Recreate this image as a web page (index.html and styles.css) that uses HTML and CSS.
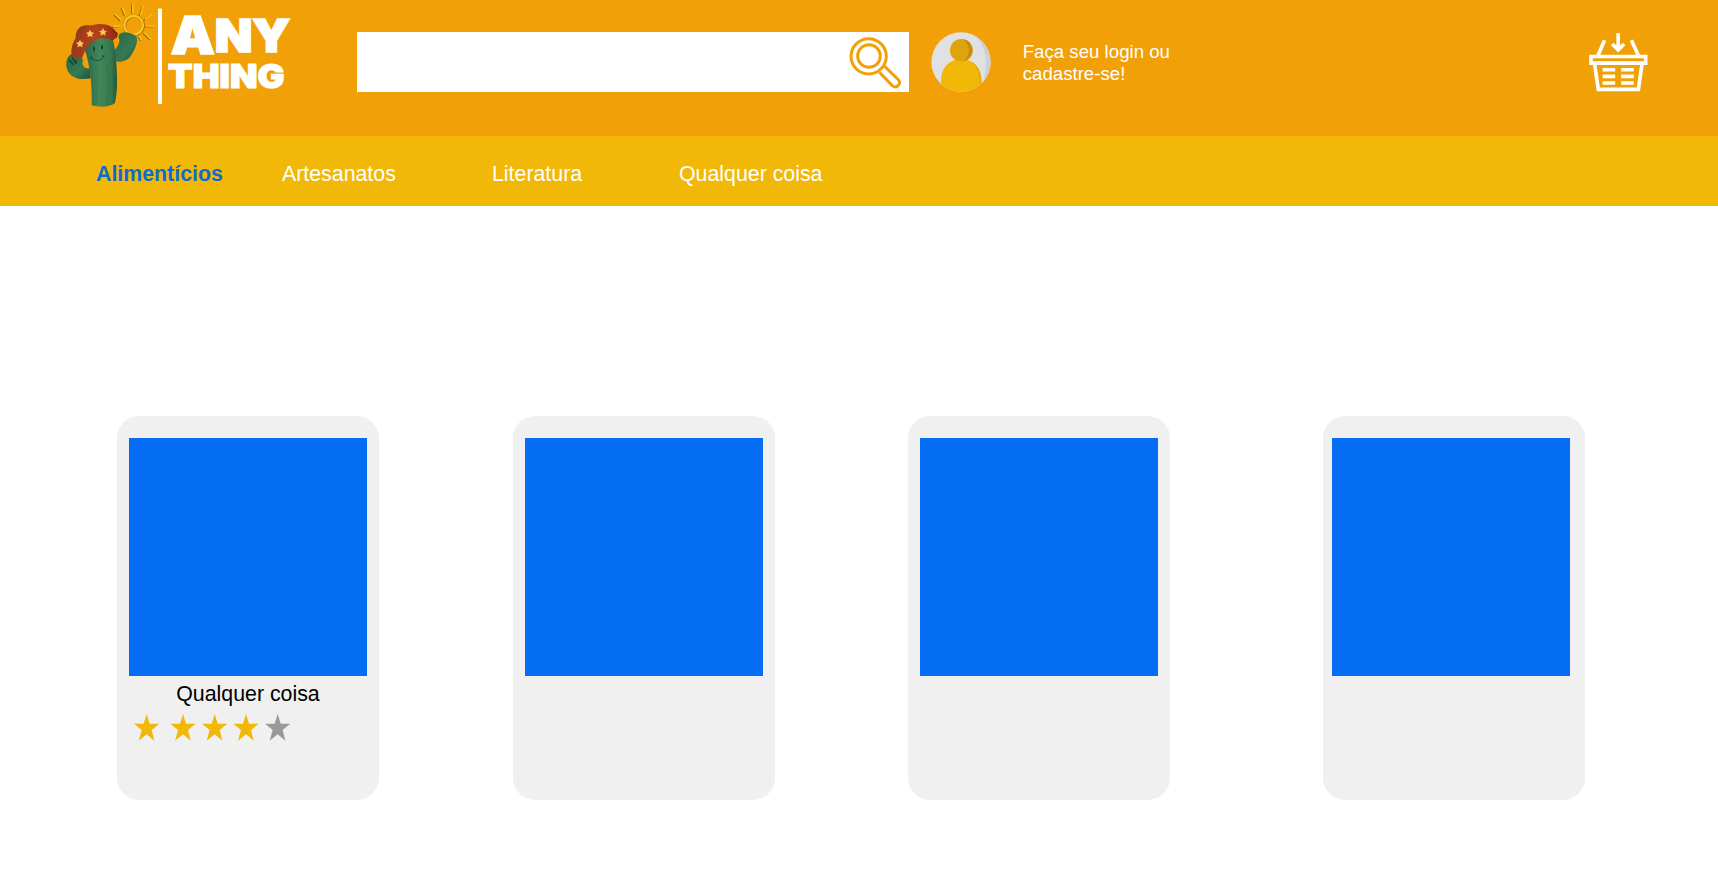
FILE: index.html
```html
<!DOCTYPE html>
<html lang="pt-BR">
<head>
<meta charset="utf-8">
<title>Any Thing</title>
<link rel="stylesheet" href="styles.css">
</head>
<body>
<header class="header">
  <svg class="logo" viewBox="0 0 780 360" role="img" aria-label="Any Thing">
    <defs>
      <linearGradient id="body" x1="0" x2="1"><stop offset="0" stop-color="#286849"/><stop offset=".45" stop-color="#438759"/><stop offset=".8" stop-color="#37794f"/><stop offset="1" stop-color="#1f583c"/></linearGradient>
      <linearGradient id="arm" x1="0" x2="1" y2="1"><stop offset="0" stop-color="#286648"/><stop offset=".6" stop-color="#367a53"/><stop offset="1" stop-color="#1e5238"/></linearGradient>
      <linearGradient id="hat" x1="0" x2="1"><stop offset="0" stop-color="#97381b"/><stop offset=".55" stop-color="#b5411b"/><stop offset="1" stop-color="#942b16"/></linearGradient>
      <path id="hat-star" d="M0-12 4-4 12-3 6 3 8 11 0 7-8 11-6 3-12-3-4-4Z"/>
    </defs>
    <g fill="none" stroke="#8a5b0a" stroke-width="4" stroke-linecap="round" transform="translate(-3 2)">
      <path d="M226 45 217 23M248 37V12M272 45 279 19M286 58 304 43M288 78H311M284 100 301 116M213 60 196 44M210 78 191 79M268 110 274 119"/>
    </g>
    <g fill="none" stroke="#f6c01c" stroke-width="5" stroke-linecap="round">
      <path d="M226 45 217 23M248 37V12M272 45 279 19M286 58 304 43M288 78H311M284 100 301 116M213 60 196 44M210 78 191 79M268 110 274 119"/>
    </g>
    <circle cx="252" cy="77" r="28" fill="none" stroke="#a96806" stroke-width="9"/>
    <circle cx="251" cy="76" r="28" fill="none" stroke="#fac823" stroke-width="7"/>
    <path d="M72 160C51 164 45 188 51 207C59 232 85 242 122 235L119 205C103 208 94 196 99 181L91 162Z" fill="url(#arm)"/>
    <path d="M58 180 70 194M67 172 76 188M78 180V192" fill="none" stroke="#153e2b" stroke-width="4"/>
    <path d="M207 104C217 92 241 95 258 108C267 121 255 148 244 165C234 182 215 188 194 184L193 151C205 140 213 121 205 112Z" fill="url(#arm)"/>
    <path d="M105 150C117 113 151 98 180 107C194 118 195 156 199 191C202 231 203 272 195 309C179 323 143 322 125 316C127 267 122 204 105 150Z" fill="url(#body)"/>
    <path d="M143 195C141 230 142 272 138 313M171 190C178 220 174 276 172 318M122 200C130 232 130 275 128 312" fill="none" stroke="#24664a" stroke-width="2" opacity=".4"/>
    <path d="M77 112C77 82 98 70 128 78L112 93 76 125Z" fill="#8c4015"/>
    <path d="M66 168C60 145 70 123 82 107C98 84 121 73 150 72C174 72 192 81 199 98C202 107 196 116 188 122C162 109 137 115 120 131C107 145 101 159 98 171C89 178 76 177 66 168Z" fill="url(#hat)"/>
    <path d="M189 92 202 101 197 115" fill="none" stroke="#752a13" stroke-width="4"/>
    <g fill="#ffc456"><use href="#hat-star" x="120" y="101"/><use href="#hat-star" x="159" y="96"/><use href="#hat-star" x="90" y="131"/></g>
    <g fill="#163926"><ellipse cx="132" cy="147" rx="2.5" ry="8"/><ellipse cx="156" cy="142" rx="2.5" ry="8"/></g>
    <path d="M123 174C134 186 154 184 161 169M157 168H164M120 174 126 171" fill="none" stroke="#173f2a" stroke-width="2.5" stroke-linecap="round"/>
    <path d="M324 26H336V312H324Z" fill="#fff"/>
    <g class="logo-text">
      <text x="362" y="162" font-size="156" textLength="132" lengthAdjust="spacingAndGlyphs">A</text>
      <text x="494" y="157" font-size="136" textLength="227" lengthAdjust="spacingAndGlyphs">NY</text>
      <text class="logo-thing" x="354" y="263" font-size="98" textLength="350" lengthAdjust="spacingAndGlyphs">THING</text>
    </g>
  </svg>
  <div class="search">
    <svg class="search-icon" viewBox="0 0 156 160" fill="none" stroke="#f2a007" stroke-width="9">
      <circle cx="59" cy="61" r="53"/><circle cx="60" cy="60" r="34"/>
      <path d="M91 109 130 149Q139 157 147 149 156 141 148 131L107 91"/>
    </svg>
  </div>
  <svg class="avatar" viewBox="0 0 180 180">
    <defs><clipPath id="circle"><circle cx="90" cy="90" r="89"/></clipPath></defs>
    <g clip-path="url(#circle)">
      <path fill="#e1e1e3" d="M0 0H180V180H0Z"/>
      <path fill="#cfd0d4" d="M118 0Q164 33 164 93T145 180H180V0Z"/>
      <path fill="#f2b807" d="M30 180V147C30 107 55 82 91 82S151 107 151 147V180Z"/>
      <path fill="#dfa70b" d="M112 85C137 95 151 116 151 147V180H146V147C146 115 132 94 112 85Z"/>
      <circle cx="91" cy="55" r="34" fill="#dda40c"/>
      <path fill="#c88d0d" d="M97 22C134 30 134 80 98 88 119 70 119 40 97 22Z"/>
    </g>
  </svg>
  <p class="login">Faça seu login ou<br>cadastre-se!</p>
  <svg class="basket" viewBox="0 0 178 178" fill="none" stroke="#fff" stroke-width="11">
    <path d="M88 0V49M70 33 88 51 106 33M47 22 27 68M128 22 149 68M6 71H171V91H6ZM17 94 28 170H149L160 94M41 111H79M97 111H135M41 131H79M97 131H135M41 151H79M97 151H135"/>
  </svg>
</header>
<nav class="nav">
  <a class="nav-item active">Alimentícios</a>
  <a class="nav-item">Artesanatos</a>
  <a class="nav-item">Literatura</a>
  <a class="nav-item">Qualquer coisa</a>
</nav>
<main class="products">
  <article class="card">
    <div class="photo"></div>
    <h2 class="name">Qualquer coisa</h2>
    <svg class="stars" viewBox="0 0 470 84">
      <defs><path id="star" d="M38 0 47 29H76L53 48 61 80 38 61 14 80 23 48 0 29H29Z"/></defs>
      <g fill="#f2b807"><use href="#star"/><use href="#star" x="109"/><use href="#star" x="204"/><use href="#star" x="298"/></g>
      <use href="#star" x="393" fill="#999"/>
    </svg>
  </article>
  <article class="card"><div class="photo"></div></article>
  <article class="card"><div class="photo"></div></article>
  <article class="card last"><div class="photo"></div></article>
</main>
</body>
</html>
```
FILE: styles.css
```css
* { box-sizing: border-box; }
body { margin: 0; background: #fff; font-family: "Liberation Sans", Arial, sans-serif; }
.header { display: flex; align-items: flex-start; height: 136px; padding-left: 50px; background: #f2a007; }
.header > * { flex-shrink: 0; }
.logo { width: 260px; height: 120px; }
.logo-text { fill: #fff; stroke: #fff; stroke-width: 5px; font-family: Inter, Lato, sans-serif; font-weight: 900; }
.logo-thing { stroke-width: 3.5px; }
.search { display: flex; justify-content: flex-end; width: 552.8px; height: 60px; margin: 32px 0 0 46.6px; padding: 4px 8.8px 0 0; background: #fff; }
.search-icon { width: 52px; height: 53.3px; }
.avatar { width: 60px; height: 60px; margin: 32px 0 0 22px; }
.login { width: 160px; margin: 41px 0 0 31.3px; color: #fff; font-size: 18.67px; line-height: 22px; white-space: nowrap; }
.basket { width: 59px; height: 59px; margin: 33px 0 0 406.3px; }
.nav { display: flex; align-items: center; height: 70px; padding: 6px 0 0 96px; background: #f2b807; color: #fff; font-size: 21.33px; }
.nav-item { width: 186px; }
.nav-item:nth-child(2) { width: 210px; }
.nav-item:nth-child(3) { width: 187px; }
.nav-item.active { color: #0d6bd0; font-weight: bold; }
.products { display: flex; gap: 133.5px; padding: 210px 0 0 117px; }
.card { flex: none; width: 262px; height: 384px; padding: 22px 12px 0; border-radius: 22px; background: #f0f0f0; }
.card.last { margin-left: 19px; padding-left: 9.4px; }
.photo { width: 238px; height: 238px; background: #046df4; }
.name { margin: 6px 0 0; font-size: 21.33px; font-weight: normal; line-height: 25px; text-align: center; }
.stars { display: block; width: 156.7px; height: 28px; margin: 7px 0 0 5px; }
```
